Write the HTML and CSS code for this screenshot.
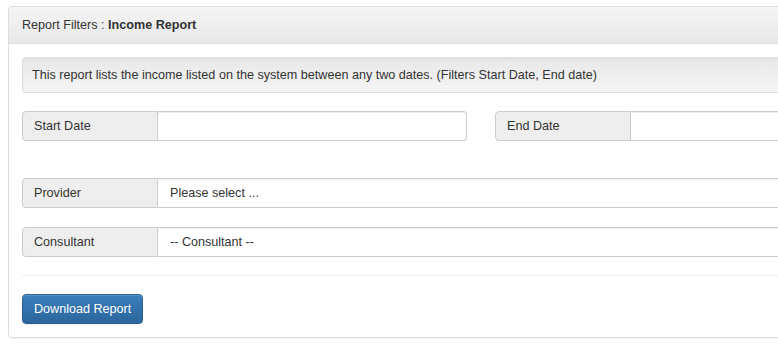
FILE: index.html
```html
<!DOCTYPE html>
<html lang="en">
<head>
    <meta charset="UTF-8">
    <meta name="viewport" content="width=device-width, initial-scale=1.0">
    <title>Income Report</title>
    <link rel="stylesheet" href="styles.css">
</head>
<body>
    <div class="panel">
        <div class="panel-heading">
            Report Filters : <strong>Income Report</strong>
        </div>
        <div class="panel-body">
            <div class="well">
                This report lists the income listed on the system between any two dates. (Filters Start Date, End date)
            </div>

            <div class="row">
                <div class="input-group">
                    <span class="addon">Start Date</span>
                    <input class="field" type="text">
                </div>
                <div class="input-group">
                    <span class="addon">End Date</span>
                    <input class="field" type="text">
                </div>
            </div>

            <div class="input-group wide provider">
                <span class="addon">Provider</span>
                <div class="field">Please select ...</div>
            </div>

            <div class="input-group wide consultant">
                <span class="addon">Consultant</span>
                <div class="field">-- Consultant --</div>
            </div>

            <hr>

            <button class="btn-primary">Download Report</button>
        </div>
    </div>
</body>
</html>
```

FILE: styles.css
```css
html, body {
    overflow: hidden;
}
body {
    margin: 0;
    padding: 6px 8px;
    font-family: "Liberation Sans", Arial, sans-serif;
    font-size: 12.6px;
    line-height: 17px;
    color: #333;
    background: #fff;
}
.panel {
    width: 944px;
    border: 1px solid #ddd;
    border-radius: 4px;
    background: #fff;
    box-shadow: 0 1px 1px rgba(0,0,0,.05);
}
.panel-heading {
    padding: 10px 13px 9px;
    background: linear-gradient(to bottom, #f5f5f5 0%, #e8e8e8 100%);
    border-bottom: 1px solid #ddd;
    border-radius: 3px 3px 0 0;
}
.panel-body {
    padding: 13px;
}
.well {
    padding: 9px 9px 8px;
    background: linear-gradient(to bottom, #e8e8e8 0%, #f5f5f5 100%);
    border: 1px solid #dcdcdc;
    border-radius: 4px;
    box-shadow: inset 0 1px 3px rgba(0,0,0,.05);
}
.row {
    display: grid;
    grid-template-columns: 1fr 1fr;
    gap: 28px;
    margin-top: 18px;
}
.input-group {
    display: flex;
    height: 30px;
}
.addon {
    box-sizing: border-box;
    width: 136px;
    flex: none;
    padding: 6px 11px;
    background: #eee;
    border: 1px solid #ccc;
    border-radius: 4px 0 0 4px;
}
.field {
    flex: 1;
    min-width: 0;
    box-sizing: border-box;
    height: 30px;
    margin: 0;
    padding: 6px 12px;
    font: inherit;
    color: #333;
    background: #fff;
    border: 1px solid #ccc;
    border-left: none;
    border-radius: 0 4px 4px 0;
    box-shadow: inset 0 1px 1px rgba(0,0,0,.075);
}
.provider {
    margin-top: 37px;
}
.consultant {
    margin-top: 19px;
}
hr {
    margin: 18px 0 18px;
    border: 0;
    border-top: 1px solid #eee;
}
.btn-primary {
    display: block;
    height: 30px;
    padding: 6px 11px;
    font: inherit;
    color: #fff;
    background: linear-gradient(to bottom, #3a7fbc 0%, #2b669c 100%);
    border: 1px solid #2a6092;
    border-radius: 4px;
    box-shadow: inset 0 1px 0 rgba(255,255,255,.15), 0 1px 1px rgba(0,0,0,.075);
}
```
